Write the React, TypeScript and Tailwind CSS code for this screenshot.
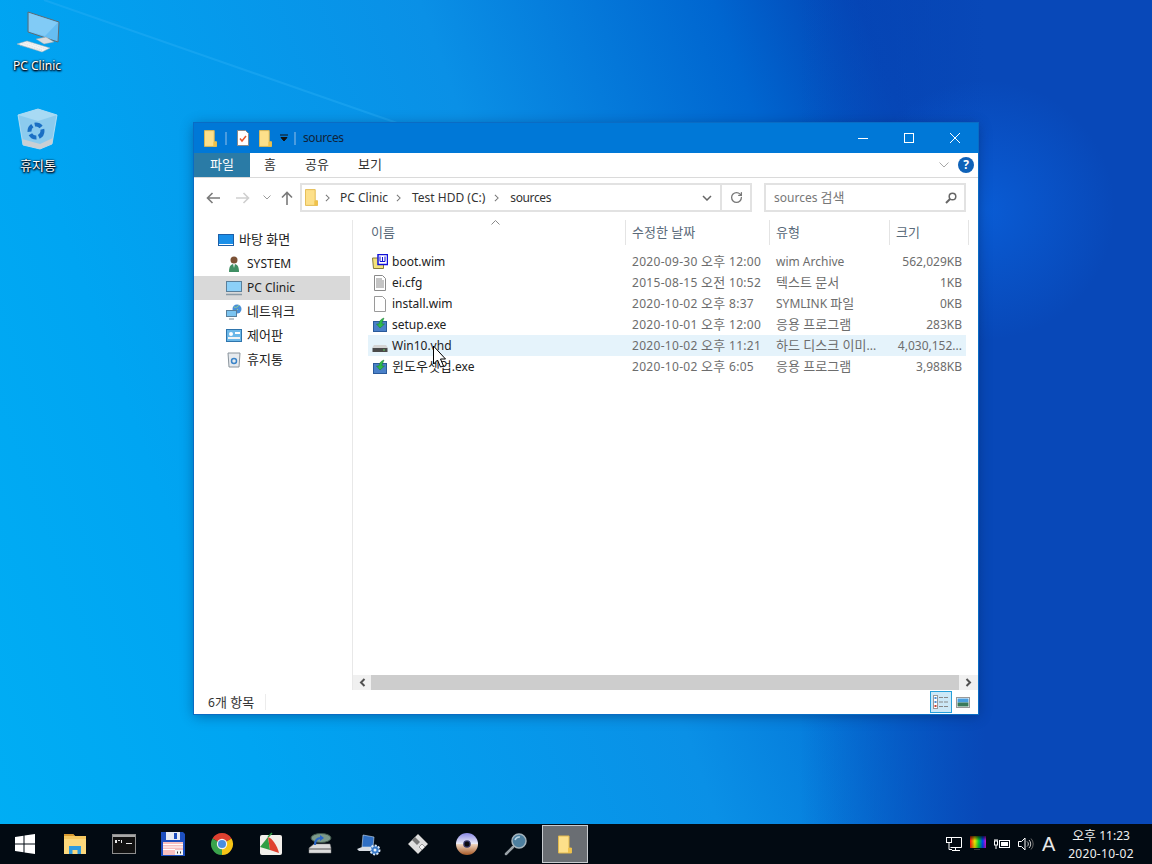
import React from "react";
import { RotateCw } from "lucide-react";

const uiFont = "font-['Noto_Sans','Noto_Sans_CJK_KR',sans-serif]";

// hangul sits a size up from the latin text, like Malgun next to Segoe
const Ko = ({ text }: { text: string }) => (
  <>
    {text.split(/([\uAC00-\uD7A3]+(?: [\uAC00-\uD7A3]+)*)/).map((part, i) =>
      i % 2 === 1 ? (
        <span key={i} className="text-[13px]">{part}</span>
      ) : (
        <span key={i}>{part}</span>
      )
    )}
  </>
);

const Folder = ({ className = "" }: { className?: string }) => (
  <svg viewBox="0 0 14 18" className={className}>
    <path d="M0.500 0.500h10.500v12h2.500v5H0.500z" fill="#fde08a" stroke="#e2b94e" />
    <path d="M10 12.500h3.500v5H10z" fill="#f0c24a" />
  </svg>
);

const Gear = () => (
  <svg viewBox="0 0 24 24" className="w-[24px] h-[24px]">
    <path d="M6 3l11 2-1 10H5z" fill="#2f6fc4" stroke="#cfe0f2" strokeWidth="0.600" />
    <path d="M0 17l5-2h11l1 4H2z" fill="#d8dde4" />
    <circle cx="18" cy="18" r="4.500" fill="#3a7ac8" stroke="#dbe7f5" strokeWidth="2" strokeDasharray="2 1.400" />
    <circle cx="18" cy="18" r="1.500" fill="#e8f0f8" />
  </svg>
);

const taskIcons: React.ReactNode[] = [
  <svg key="explorer" viewBox="0 0 24 24" className="w-[24px] h-[24px]">
    <path d="M1 2h9l2 2h11v18H1z" fill="#f6c860" />
    <path d="M1 2h9l2 2H1z" fill="#d89a30" />
    <path d="M1 7h22v15H1z" fill="#fcd87c" />
    <path d="M6 22v-8h12v8h-3.500v-4h-5v4z" fill="#2d9be0" />
  </svg>,
  <svg key="cmd" viewBox="0 0 24 20" className="w-[24px] h-[20px]">
    <rect x="0.500" y="0.500" width="23" height="19" fill="#111" stroke="#8e8e8e" />
    <rect x="1" y="1" width="22" height="2" fill="#a8a8a8" />
    <path d="M3 6h2v3H3zM6 6h2v1H6zM9 6h1v3H9zM14 9h6v1h-6z" fill="#e8e8e8" />
  </svg>,
  <svg key="floppy" viewBox="0 0 24 24" className="w-[24px] h-[24px]">
    <path d="M0 0h22l2 2v22H0z" fill="#1d4fbf" />
    <rect x="5" y="0" width="14" height="8" fill="#e6ebf4" />
    <rect x="13" y="1" width="3" height="6" fill="#1d4fbf" />
    <rect x="2" y="10" width="20" height="13" fill="#f8c0c0" />
    <path d="M2 12.500h20M2 15h20M2 17.500h12" stroke="#fff" />
    <rect x="14" y="18" width="8" height="5" fill="#f4f4f4" />
    <path d="M16 19.500h1v2h-1zM19 19.500h1v2h-1z" fill="#333" />
  </svg>,
  <svg key="chrome" viewBox="0 0 24 24" className="w-[24px] h-[24px]">
    <path d="M12 12L2.470 6.500A11 11 0 0 1 21.530 6.500z" fill="#dc4030" />
    <path d="M12 12L21.530 6.500A11 11 0 0 1 12 23z" fill="#f6c416" />
    <path d="M12 12L12 23A11 11 0 0 1 2.470 6.500z" fill="#3aa34c" />
    <circle cx="12" cy="12" r="5.200" fill="#f4f4f4" />
    <circle cx="12" cy="12" r="4" fill="#4a8de0" />
  </svg>,
  <svg key="picpick" viewBox="0 0 24 24" className="w-[24px] h-[24px]">
    <rect x="1" y="3" width="22" height="20" rx="2" fill="#f2efea" />
    <path d="M1 15L9 5l2 13z" fill="#2f9e44" />
    <path d="M9 5c4 1 9 8 11 16l-9-3z" fill="#e0402e" />
    <path d="M9 5l4-4" stroke="#2f9e44" strokeWidth="1.500" />
  </svg>,
  <svg key="scanner" viewBox="0 0 24 24" className="w-[24px] h-[24px]">
    <ellipse cx="13" cy="6" rx="10" ry="4.500" fill="#7c9a8a" stroke="#41584c" />
    <path d="M1 16l5-4h16l1 4v5H1z" fill="#dcdcdc" stroke="#888" strokeWidth="0.500" />
    <path d="M1 17h22" stroke="#555" />
    <path d="M7 13c0-5 2-7 6-7" fill="none" stroke="#2b68c8" strokeWidth="2" />
    <path d="M12 3l4 3-4 3z" fill="#2b68c8" />
  </svg>,
  <Gear key="gear" />,
  <svg key="disk" viewBox="0 0 24 24" className="w-[24px] h-[24px]">
    <path d="M12 2l10 10-10 10L2 12z" fill="#dedede" stroke="#666" strokeWidth="0.500" />
    <path d="M9 5l5 5-3 3-5-5z" fill="#777" />
    <path d="M13 15l3-3 3 3-3 3z" fill="#f4f4f4" stroke="#666" strokeWidth="0.600" />
  </svg>,
  <svg key="dvd" viewBox="0 0 24 24" className="w-[24px] h-[24px]">
    <defs>
      <linearGradient id="dvdTop" x1="0" y1="0" x2="0" y2="1">
        <stop offset="0" stopColor="#8a8ae8" />
        <stop offset="1" stopColor="#f0f0f8" />
      </linearGradient>
      <linearGradient id="dvdBottom" x1="0" y1="0" x2="0" y2="1">
        <stop offset="0" stopColor="#f0d8c4" />
        <stop offset="1" stopColor="#a85a26" />
      </linearGradient>
    </defs>
    <path d="M1 12a11 11 0 0 1 22 0z" fill="url(#dvdTop)" />
    <path d="M1 12a11 11 0 0 0 22 0z" fill="url(#dvdBottom)" />
    <circle cx="12" cy="12" r="3.800" fill="#3a3a6a" />
    <circle cx="12" cy="12" r="2.500" fill="#0a0a10" />
  </svg>,
  <svg key="search" viewBox="0 0 24 24" className="w-[24px] h-[24px]">
    <path d="M9 15l-7 7" stroke="#9aa2a8" strokeWidth="2.500" strokeLinecap="round" />
    <circle cx="15" cy="9" r="7" fill="#4d7f9f" stroke="#a5b4bd" strokeWidth="1.500" />
    <path d="M11 8a4.500 4.500 0 0 1 5-3" stroke="#b8d4e4" fill="none" strokeWidth="1.500" />
  </svg>,
];

const navRows: { label: string; icon: React.ReactNode; indent: string; active?: boolean }[] = [
  {
    label: "바탕 화면",
    indent: "pl-[24px]",
    icon: (
      <svg viewBox="0 0 16 12" className="w-[16px] h-[12px]">
        <rect x="0.500" y="0.500" width="15" height="11" fill="#1a8fe8" stroke="#1c5fa8" />
        <rect x="1" y="10" width="14" height="1" fill="#fff" />
      </svg>
    ),
  },
  {
    label: "SYSTEM",
    indent: "pl-[32px]",
    icon: (
      <svg viewBox="0 0 16 16" className="w-[16px] h-[16px]">
        <circle cx="8" cy="4" r="3.500" fill="#7c5236" />
        <path d="M3 16c0-6 2-8 5-8s5 2 5 8z" fill="#3f8f63" />
        <path d="M7 8h2l-1 4z" fill="#f0f0f0" />
      </svg>
    ),
  },
  {
    label: "PC Clinic",
    indent: "pl-[32px]",
    active: true,
    icon: (
      <svg viewBox="0 0 16 16" className="w-[16px] h-[16px]">
        <rect x="0.500" y="1.500" width="15" height="10" fill="#8cd0f8" stroke="#5a7f9a" />
        <path d="M0 14.500h16" stroke="#8a9aa6" strokeWidth="1.500" />
      </svg>
    ),
  },
  {
    label: "네트워크",
    indent: "pl-[32px]",
    icon: (
      <svg viewBox="0 0 16 16" className="w-[16px] h-[16px]">
        <circle cx="11" cy="5" r="4.500" fill="#4a90d8" />
        <path d="M8 3c2 1 4 0 5-2M9 8l3-3" stroke="#8fd08f" fill="none" />
        <rect x="0.500" y="6.500" width="10" height="6" fill="#7cc4f0" stroke="#5a7f9a" />
        <path d="M3 15h5" stroke="#7a8a96" />
      </svg>
    ),
  },
  {
    label: "제어판",
    indent: "pl-[32px]",
    icon: (
      <svg viewBox="0 0 16 14" className="w-[16px] h-[14px]">
        <rect x="0.500" y="0.500" width="15" height="12" fill="#6cb8e8" stroke="#2f75ad" />
        <circle cx="5" cy="5" r="2" fill="#fff" />
        <rect x="9" y="3" width="5" height="2" fill="#fff" />
        <rect x="2" y="8" width="12" height="2" fill="#f4f4f4" />
      </svg>
    ),
  },
  {
    label: "휴지통",
    indent: "pl-[32px]",
    icon: (
      <svg viewBox="0 0 16 16" className="w-[16px] h-[16px]">
        <path d="M2 1h12l-1 14H3z" fill="#e6eaee" stroke="#8a949c" />
        <circle cx="8" cy="9" r="2.500" fill="none" stroke="#3a84c8" strokeWidth="1.500" />
      </svg>
    ),
  },
];

const WimIcon = () => (
  <svg viewBox="0 0 16 16" className="w-[16px] h-[16px]">
    <path d="M0.500 4h11v10.500H1.500z" fill="#f4e27a" stroke="#857a3a" />
    <rect x="6" y="0.500" width="9.500" height="10" fill="#fff" stroke="#1010d8" strokeWidth="1.500" />
    <path d="M8 2.500v5h5v-5M10.500 3v4" stroke="#1010d8" fill="none" />
  </svg>
);
const TextIcon = () => (
  <svg viewBox="0 0 14 16" className="w-[14px] h-[16px]">
    <path d="M1.500 0.500h8l3 3v12h-11z" fill="#fff" stroke="#8a8a8a" />
    <path d="M3 4h6M3 6h8M3 8h8M3 10h8M3 12h8" stroke="#8a8a8a" />
  </svg>
);
const BlankIcon = () => (
  <svg viewBox="0 0 14 16" className="w-[14px] h-[16px]">
    <path d="M1.500 0.500h8l3 3v12h-11z" fill="#fff" stroke="#9a9a9a" />
  </svg>
);
const SetupIcon = () => (
  <svg viewBox="0 0 16 16" className="w-[16px] h-[16px]">
    <rect x="1.500" y="4.500" width="13" height="10" fill="#4a80c8" stroke="#2a5a9a" />
    <path d="M8 11L4.500 7H7c0-3 2-5 5-6l-1 2.500c-.6 1-1 2-1 3.500h2.500z" fill="#2fb84a" stroke="#1a7a2f" strokeWidth="0.500" />
  </svg>
);
const DriveIcon = () => (
  <svg viewBox="0 0 16 16" className="w-[16px] h-[16px]">
    <path d="M2 7h12l2 3H0z" fill="#d4d4d4" />
    <rect x="0.500" y="10" width="15" height="4" fill="#4a4a4a" />
    <rect x="11" y="11.500" width="2" height="1" fill="#60d060" />
  </svg>
);

const files = [
  { name: "boot.wim", date: "2020-09-30 오후 12:00", type: "wim Archive", size: "562,029KB", icon: <WimIcon /> },
  { name: "ei.cfg", date: "2015-08-15 오전 10:52", type: "텍스트 문서", size: "1KB", icon: <TextIcon /> },
  { name: "install.wim", date: "2020-10-02 오후 8:37", type: "SYMLINK 파일", size: "0KB", icon: <BlankIcon /> },
  { name: "setup.exe", date: "2020-10-01 오후 12:00", type: "응용 프로그램", size: "283KB", icon: <SetupIcon /> },
  { name: "Win10.vhd", date: "2020-10-02 오후 11:21", type: "하드 디스크 이미...", size: "4,030,152...", icon: <DriveIcon />, hover: true },
  { name: "윈도우셋업.exe", date: "2020-10-02 오후 6:05", type: "응용 프로그램", size: "3,988KB", icon: <SetupIcon /> },
];

const columns = ["이름", "수정한 날짜", "유형", "크기"];

const Crumb = () => (
  <svg viewBox="0 0 6 10" className="w-[5px] h-[8px]">
    <path d="M1 1l4 4-4 4" fill="none" stroke="#777" strokeWidth="1.300" />
  </svg>
);

const Wallpaper = () => (
  <svg viewBox="0 0 1152 864" preserveAspectRatio="none" className="absolute inset-0 w-full h-full">
    <defs>
      <linearGradient id="base" gradientUnits="userSpaceOnUse" x1="0" y1="864" x2="1295" y2="393">
        <stop offset="0" stopColor="#00aef4" />
        <stop offset="0.2" stopColor="#00a5f2" />
        <stop offset="0.5" stopColor="#0a90e6" />
        <stop offset="0.7" stopColor="#0066d0" />
        <stop offset="0.8" stopColor="#0444b4" />
        <stop offset="1" stopColor="#033aa8" />
      </linearGradient>
      <linearGradient id="rightFade" gradientUnits="userSpaceOnUse" x1="800" y1="0" x2="985" y2="0">
        <stop offset="0" stopColor="#0848b8" stopOpacity="0" />
        <stop offset="1" stopColor="#0848b8" />
      </linearGradient>
      <radialGradient id="glow" gradientUnits="userSpaceOnUse" cx="985" cy="210" r="130">
        <stop offset="0" stopColor="#0a64e0" stopOpacity="0.7" />
        <stop offset="1" stopColor="#0a64e0" stopOpacity="0" />
      </radialGradient>
    </defs>
    <rect width="1152" height="864" fill="url(#base)" />
    <rect width="1152" height="864" fill="url(#rightFade)" />
    <rect width="1152" height="864" fill="url(#glow)" />
    <line x1="44" y1="0" x2="400" y2="124" stroke="#2cb0f6" strokeWidth="2" opacity="0.4" />
  </svg>
);

const PcIcon = () => (
  <svg viewBox="0 0 48 48" className="w-[48px] h-[48px]">
    <polygon points="15,2 46,12 45,32 15,22" fill="#66bdf2" stroke="#5f6c74" strokeWidth="1" />
    <polygon points="16,3 45,12.500 32,26 16,21.500" fill="#93d4f8" opacity="0.6" />
    <polygon points="23,29 33,27 41,32 31,34" fill="#d8dde0" stroke="#9aa0a4" strokeWidth="0.400" />
    <polygon points="4,34 14,31 37,38 29,42" fill="#f2f4f5" stroke="#a8aeb2" strokeWidth="0.500" />
    <path d="M9 33l20 7M13 32l20 7M7 35.500l22 5" stroke="#c4c8cc" strokeWidth="0.500" strokeDasharray="1 0.800" />
  </svg>
);
const BinIcon = () => (
  <svg viewBox="0 0 44 48" className="w-[44px] h-[48px]">
    <polygon points="2,7 22,1 41,7 36,36 24,41 7,37" fill="#8ccbee" stroke="#c4e4f6" strokeWidth="0.800" />
    <polygon points="2,7 22,1 41,7 22,13" fill="#a8daf4" />
    <polygon points="6,31 24,36 37,30 36,36 24,41 7,37" fill="#c9cfd4" />
    <circle cx="20" cy="23" r="6.500" fill="none" stroke="#1a6fc4" strokeWidth="4" strokeDasharray="7 2.500" />
  </svg>
);

const App = () => {
  return (
    <div className={`relative w-[1152px] h-[864px] overflow-hidden ${uiFont}`}>
      <Wallpaper />

      {/* desktop icons */}
      <div className="absolute left-[13px] top-[10px] w-[48px] flex flex-col items-center">
        <PcIcon />
        <span className="text-[12px] leading-[16px] text-white whitespace-nowrap [text-shadow:0_0_2px_#000,0_1px_2px_#000,1px_1px_2px_#003]">PC Clinic</span>
      </div>
      <div className="absolute left-[16px] top-[108px] w-[44px] flex flex-col items-center">
        <BinIcon />
        <span className="text-[13px] leading-[16px] text-white mt-[1px] whitespace-nowrap [text-shadow:0_0_2px_#000,0_1px_2px_#000,1px_1px_2px_#003]">휴지통</span>
      </div>

      {/* explorer window */}
      <div className="absolute left-[194px] top-[123px] w-[784px] h-[591px] flex flex-col bg-white text-[12px] shadow-[0_0_0_1px_#0a6cc4,0_2px_12px_rgba(0,30,80,0.45)]">
        <div className="h-[30px] bg-[#0078d7] flex items-center shrink-0 pl-[10px]">
          <Folder className="w-[13px] h-[17px]" />
          <div className="w-[2px] h-[13px] bg-[#4a9ce0] ml-[8px]" />
          <svg viewBox="0 0 12 16" className="w-[12px] h-[16px] ml-[10px]">
            <path d="M0.500 0.500h8l3 3v12H0.500z" fill="#fff" stroke="#8a8a8a" />
            <path d="M3 8.500l2 2.500L9 6" fill="none" stroke="#e8552a" strokeWidth="1.500" />
          </svg>
          <Folder className="w-[13px] h-[17px] ml-[10px]" />
          <svg viewBox="0 0 8 8" className="w-[8px] h-[8px] ml-[8px]">
            <path d="M0 1h8M1 3.500h6L4 7z" stroke="#111" fill="#111" strokeWidth="1" />
          </svg>
          <div className="w-[2px] h-[13px] bg-[#4a9ce0] ml-[6px]" />
          <span className="ml-[7px] text-[#10233a] tracking-[-0.4px]">sources</span>
          <div className="ml-auto flex items-center h-full">
            <div className="w-[46px] flex justify-center"><div className="w-[10px] h-px bg-white" /></div>
            <div className="w-[46px] flex justify-center"><div className="w-[10px] h-[10px] border border-white" /></div>
            <div className="w-[46px] flex justify-center">
              <svg viewBox="0 0 10 10" className="w-[10px] h-[10px]"><path d="M0 0l10 10M10 0L0 10" stroke="#fff" /></svg>
            </div>
          </div>
        </div>

        <div className="h-[25px] flex items-center shrink-0 border-b border-[#dadada] text-[13px]">
          <div className="w-[56px] h-full bg-[#2a7ba6] text-white flex items-center justify-center">파일</div>
          <span className="ml-[14px] w-[13px] text-[#333]">홈</span>
          <span className="ml-[28px] text-[#333]">공유</span>
          <span className="ml-[29px] text-[#333]">보기</span>
          <svg viewBox="0 0 10 6" className="w-[10px] h-[6px] ml-auto mr-[9px]"><path d="M0.500 0.500L5 5l4.500-4.500" fill="none" stroke="#a8a8a8" /></svg>
          <div className="w-[16px] h-[16px] rounded-full bg-[#0f62b8] text-white font-bold text-[12px] leading-[16px] text-center mr-[4px]">?</div>
        </div>

        <div className="h-[42px] flex items-start pt-[5px] shrink-0 text-[#333]">
          <div className="w-[106px] h-[29px] flex items-center pl-[12px]">
            <svg viewBox="0 0 14 12" className="w-[14px] h-[12px]"><path d="M14 6H2M6.500 1L1.500 6l5 5" fill="none" stroke="#7a7a7a" strokeWidth="1.600" /></svg>
            <svg viewBox="0 0 14 12" className="w-[14px] h-[12px] ml-[16px]"><path d="M0 6h12M7.500 1l5 5-5 5" fill="none" stroke="#cfcfcf" strokeWidth="1.600" /></svg>
            <svg viewBox="0 0 8 5" className="w-[8px] h-[5px] ml-[13px]"><path d="M0.500 0.500L4 4l3.500-3.500" fill="none" stroke="#9a9a9a" /></svg>
            <svg viewBox="0 0 12 14" className="w-[12px] h-[14px] ml-[10px]"><path d="M6 14V2M1 6.500l5-5 5 5" fill="none" stroke="#7a7a7a" strokeWidth="1.600" /></svg>
          </div>
          <div className="w-[452px] h-[29px] border-2 border-[#e2e2e2] flex items-center">
            <Folder className="w-[13px] h-[17px] ml-[3px]" />
            <div className="ml-[7px]"><Crumb /></div>
            <span className="ml-[10px]">PC Clinic</span>
            <div className="ml-[8px]"><Crumb /></div>
            <span className="ml-[11px]">Test HDD (C:)</span>
            <div className="ml-[9px]"><Crumb /></div>
            <span className="ml-[11px] tracking-[-0.4px]">sources</span>
            <svg viewBox="0 0 10 6" className="w-[10px] h-[6px] ml-auto mr-[8px]"><path d="M1 1l4 4 4-4" fill="none" stroke="#666" strokeWidth="1.500" /></svg>
            <div className="w-[30px] h-full border-l-2 border-[#e2e2e2] flex items-center justify-center">
              <RotateCw size={13} color="#777" strokeWidth={2.4} />
            </div>
          </div>
          <div className="ml-[12px] w-[202px] h-[29px] border-2 border-[#e2e2e2] flex items-center pl-[8px] pr-[7px] text-[#777]">
            <span><Ko text="sources 검색" /></span>
            <svg viewBox="0 0 12 12" className="w-[12px] h-[12px] ml-auto"><circle cx="7.500" cy="4.500" r="3.300" fill="none" stroke="#666" strokeWidth="1.500" /><path d="M5 7l-4 4" stroke="#666" strokeWidth="2" /></svg>
          </div>
        </div>

        <div className="flex-1 flex min-h-0">
          <div className="w-[159px] shrink-0 border-r border-[#e8e8e8] pt-[8px] pr-[2px] text-[#222]">
            {navRows.map((row) => (
              <div key={row.label} className={`h-[24px] flex items-center gap-[5px] ${row.indent} ${row.active ? "bg-[#d9d9d9]" : ""}`}>
                <div className="w-[16px] flex justify-center">{row.icon}</div>
                <span><Ko text={row.label} /></span>
              </div>
            ))}
          </div>
          <div className="flex-1 flex flex-col min-w-0">
            <div className="flex-1 pl-[15px] relative">
              <svg viewBox="0 0 9 5" className="absolute left-[138px] top-0 w-[9px] h-[5px]"><path d="M0.500 4.500L4.500 0.500l4 4" fill="none" stroke="#888" /></svg>
              <div className="grid grid-cols-[258px_144px_120px_79px] h-[25px] text-[13px] text-[#5a6a7a]">
                {columns.map((col, i) => (
                  <div key={col} className={`flex items-center border-r border-[#e4e4e4] ${i === 0 ? "pl-[3px]" : "pl-[6px]"}`}>{col}</div>
                ))}
              </div>
              <div className="mt-[6px] w-[598px]">
                {files.map((f) => (
                  <div key={f.name} className={`grid grid-cols-[258px_144px_120px_76px] h-[21px] items-center ${f.hover ? "bg-[#e5f3fb]" : ""}`}>
                    <div className="flex items-center text-[#222]">
                      <div className="w-[24px] flex justify-center">{f.icon}</div>
                      <span><Ko text={f.name} /></span>
                    </div>
                    <div className="pl-[6px] text-[#6d6d6d] whitespace-nowrap tracking-[0.3px]"><Ko text={f.date} /></div>
                    <div className="pl-[6px] text-[#6d6d6d] whitespace-nowrap"><Ko text={f.type} /></div>
                    <div className="pr-[4px] text-right text-[#6d6d6d] whitespace-nowrap">{f.size}</div>
                  </div>
                ))}
              </div>
            </div>
            <div className="h-[15px] flex bg-[#f0f0f0] shrink-0">
              <div className="w-[18px] flex items-center justify-center">
                <svg viewBox="0 0 7 9" className="w-[7px] h-[9px]"><path d="M5.500 1L2 4.500 5.500 8" fill="none" stroke="#505050" strokeWidth="2" /></svg>
              </div>
              <div className="flex-1 bg-[#cdcdcd]" />
              <div className="w-[19px] flex items-center justify-center">
                <svg viewBox="0 0 7 9" className="w-[7px] h-[9px]"><path d="M1.500 1L5 4.500 1.500 8" fill="none" stroke="#505050" strokeWidth="2" /></svg>
              </div>
            </div>
          </div>
        </div>

        <div className="h-[24px] shrink-0 flex items-center pl-[14px] text-[#333]">
          <span className="w-[57px] pt-[2px]"><Ko text="6개 항목" /></span>
          <div className="w-px h-[16px] bg-[#ececec]" />
          <div className="ml-auto flex items-center pr-[8px]">
            <div className="w-[22px] h-[22px] bg-[#cce8f7] border border-[#26a0da] flex items-center justify-center">
              <svg viewBox="0 0 16 14" className="w-[16px] h-[14px]">
                <rect x="0.500" y="0.500" width="4" height="13" fill="#fff" stroke="#999" />
                <rect x="1.500" y="2" width="2" height="2" fill="#4a90d8" />
                <rect x="1.500" y="6" width="2" height="2" fill="#4a90d8" />
                <rect x="1.500" y="10" width="2" height="2" fill="#d04030" />
                <path d="M6 2.500h4M11 2.500h4M6 7h4M11 7h4M6 11.500h4M11 11.500h4" stroke="#888" />
              </svg>
            </div>
            <svg viewBox="0 0 14 11" className="w-[14px] h-[11px] ml-[4px]">
              <rect x="0.500" y="0.500" width="13" height="10" fill="#fff" stroke="#999" />
              <rect x="1.500" y="1.500" width="11" height="4" fill="#4aa0e0" />
              <rect x="1.500" y="5.500" width="11" height="4" fill="#3a7a5a" />
            </svg>
          </div>
        </div>
      </div>

      {/* mouse pointer */}
      <svg viewBox="0 0 13 24" className="absolute left-[432px] top-[345px] w-[14px] h-[24px]">
        <path d="M1 1v18l4-4 3 7 3-1-3-7h5z" fill="#fff" stroke="#000" />
      </svg>

      {/* taskbar */}
      <div className="absolute left-0 right-0 bottom-0 h-[40px] bg-[#020a12] flex items-center text-white">
        <div className="w-[50px] flex justify-center">
          <svg viewBox="0 0 20 20" className="w-[20px] h-[20px]">
            <path d="M0 3l8.500-1.300v7.800H0zM9.500 1.500L20 0v9.500H9.500zM0 10.500h8.500v7.800L0 17zM9.500 10.500H20V20L9.500 18.500z" fill="#fff" />
          </svg>
        </div>
        {taskIcons.map((icon, i) => (
          <div key={i} className="w-[49px] flex justify-center">{icon}</div>
        ))}
        <div className="w-[46px] h-[38px] ml-[2px] bg-[#6a6e73] border border-[#c8ccd0] flex items-center justify-center">
          <Folder className="w-[14px] h-[19px]" />
        </div>
        <div className="ml-auto flex items-center">
          <svg viewBox="0 0 16 16" className="w-[16px] h-[16px]">
            <path d="M4.500 1.500h11v10h-11M9.500 11.500v3M6 14.500h8" fill="none" stroke="#fff" />
            <rect x="0.500" y="1.500" width="5" height="5" fill="#020a12" stroke="#fff" />
            <path d="M3 6.500v7h3" fill="none" stroke="#fff" />
          </svg>
          <svg viewBox="0 0 16 16" className="w-[16px] h-[16px] ml-[8px]">
            <defs>
              <linearGradient id="rb" x1="0" y1="0" x2="1" y2="0">
                <stop offset="0" stopColor="#ff1010" />
                <stop offset="0.3" stopColor="#f0f000" />
                <stop offset="0.55" stopColor="#00d040" />
                <stop offset="0.8" stopColor="#0040ff" />
                <stop offset="1" stopColor="#e010d0" />
              </linearGradient>
              <linearGradient id="rd" x1="0" y1="0" x2="0" y2="1">
                <stop offset="0" stopColor="#000" stopOpacity="0.7" />
                <stop offset="0.4" stopColor="#000" stopOpacity="0" />
                <stop offset="1" stopColor="#000" stopOpacity="0.2" />
              </linearGradient>
            </defs>
            <rect width="16" height="12" fill="url(#rb)" />
            <rect width="16" height="12" fill="url(#rd)" />
            <path d="M4 13.500h6" stroke="#3a3a3a" />
          </svg>
          <svg viewBox="0 0 16 12" className="w-[16px] h-[12px] ml-[8px]">
            <rect x="5.500" y="2.500" width="10" height="7" fill="none" stroke="#fff" />
            <rect x="7" y="4" width="7" height="4" fill="#fff" />
            <rect x="0.500" y="3" width="3" height="4" fill="none" stroke="#fff" />
            <path d="M1 1v2M3 1v2M2 7v4" stroke="#fff" />
          </svg>
          <svg viewBox="0 0 16 14" className="w-[16px] h-[14px] ml-[8px]">
            <path d="M0.500 4.500h3l3.500-3.500v12L3.500 9.500h-3z" fill="none" stroke="#fff" />
            <path d="M9 4.500a3 3 0 0 1 0 5M11 3a5.500 5.500 0 0 1 0 8" fill="none" stroke="#ccc" />
            <path d="M13 1.500a8 8 0 0 1 0 11" fill="none" stroke="#666" />
          </svg>
          <span className="ml-[8px] w-[14px] text-[20px] leading-none text-[#e8e8e8] font-['Liberation_Sans',sans-serif]">A</span>
          <div className="w-[90px] mr-[6px] pt-[1px] text-center text-[12px] leading-[18px] text-[#f0f0f0]">
            <div><Ko text="오후 11:23" /></div>
            <div className="tracking-[0.3px]">2020-10-02</div>
          </div>
        </div>
      </div>
    </div>
  );
};

export default App;
